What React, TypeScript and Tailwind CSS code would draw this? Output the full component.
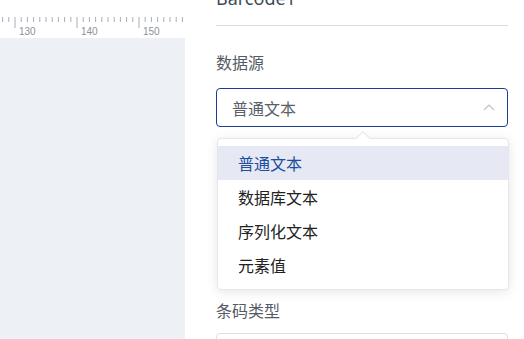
import React from "react";

const items = ["普通文本", "数据库文本", "序列化文本", "元素值"];

function Ruler() {
  const ticks = [];
  const start = 15 - 6.2 * 3;
  for (let i = 0; i < 32; i++) {
    const x = start + i * 6.2;
    if (x < 0 || x > 184) continue;
    const major = (i - 3) % 10 === 0;
    ticks.push(
      <line
        key={i}
        x1={x}
        x2={x}
        y1={17}
        y2={major ? 28 : 22}
        stroke="#a7adb8"
        strokeWidth={1}
      />
    );
  }
  return (
    <svg width="185" height="38" className="block">
      {ticks}
      {[
        ["130", 19],
        ["140", 81],
        ["150", 143],
      ].map(([t, x]) => (
        <text
          key={t}
          x={x}
          y={35}
          fontSize="10"
          fill="#8b919c"
          fontFamily="Liberation Sans, Arial, sans-serif"
        >
          {t}
        </text>
      ))}
    </svg>
  );
}

export default function App() {
  return (
    <div className="flex h-[339px] w-[524px] overflow-hidden bg-white font-['Noto_Sans_CJK_SC','Noto_Sans',sans-serif]">
      <div className="flex w-[185px] flex-col">
        <div className="h-[38px] bg-white">
          <Ruler />
        </div>
        <div className="flex-1 bg-[#edf1f5]" />
      </div>

      <div className="relative flex-1 bg-white pl-[31px] pr-[16px]">
        <div className="mt-[-14px] text-[18px] leading-[24px] text-[#3d4a5c] font-['Noto_Sans',sans-serif]">
          Barcode1
        </div>
        <div className="mt-[15px] h-px bg-[#d6dce6]" />

        <div className="mt-[25px] text-[16px] leading-[22px] text-[#555b66]">数据源</div>
        <div className="mt-[15px] flex h-[39px] items-center justify-between rounded-[4px] border border-[#1a3f8f] pl-[15px] pr-[11px]">
          <span className="text-[16px] text-[#5a5f68]">普通文本</span>
          <svg width="12" height="7" viewBox="0 0 12 7" className="mr-px">
            <path d="M1 6 L6 1 L11 6" fill="none" stroke="#bcc3cf" strokeWidth="1.2" />
          </svg>
        </div>

        <div className="mt-[172px] text-[16px] leading-[22px] text-[#555b66]">条码类型</div>
        <div className="mt-[12px] h-[40px] rounded-[4px] border border-[#dcdfe6]" />

        <div className="absolute left-[32px] right-[15px] top-[138px] rounded-[4px] border border-[#e4e7ed] bg-white py-[7px] shadow-[0_2px_12px_rgba(0,0,0,0.1)]">
          <div className="absolute left-[140px] top-[-6px] h-[10px] w-[10px] rotate-45 border-l border-t border-[#e4e7ed] bg-white" />
          {items.map((t, i) => (
            <div
              key={t}
              className={
                "relative flex h-[34px] items-center pl-[20px] text-[16px] " +
                (i === 0 ? "bg-[#e6e9f4] text-[#1c4e9c]" : "text-[#222]")
              }
            >
              {t}
            </div>
          ))}
        </div>
      </div>
    </div>
  );
}
